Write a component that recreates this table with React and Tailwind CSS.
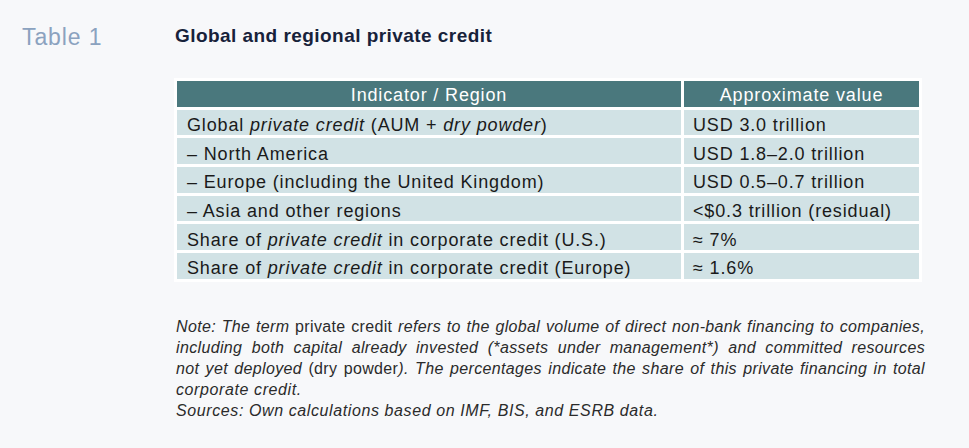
import React from "react";

const rows = [
  [<>Global <i>private credit</i> (AUM + <i>dry powder</i>)</>, "USD 3.0 trillion"],
  ["– North America", "USD 1.8–2.0 trillion"],
  ["– Europe (including the United Kingdom)", "USD 0.5–0.7 trillion"],
  ["– Asia and other regions", "<$0.3 trillion (residual)"],
  [<>Share of <i>private credit</i> in corporate credit (U.S.)</>, "≈ 7%"],
  [<>Share of <i>private credit</i> in corporate credit (Europe)</>, "≈ 1.6%"],
];

const J = "whitespace-nowrap tracking-[0.35px] text-justify [text-align-last:justify]";

export default function App() {
  return (
    <div className="w-[969px] h-[448px] bg-[#f7f8fa] flex font-['Liberation_Sans',Arial,sans-serif] overflow-hidden">
      <div className="w-[174px] shrink-0 pl-[22px] pt-[26px] text-[23px] tracking-[0.9px] text-[#8ba2bf] leading-none">Table 1</div>
      <div className="flex flex-col">
        <div className="pt-[26px] pl-[1px] text-[19px] font-bold tracking-[0.45px] text-[#17223a] leading-none">Global and regional private credit</div>
        <table className="mt-[33px] bg-white border-separate border-spacing-[3px] text-[18px] tracking-[0.85px] text-[#1a1a1a] leading-none w-[748px]">
          <thead>
            <tr className="h-[25.7px]">
              <th className="w-[504px] bg-[#4a787d] text-white font-normal text-center align-bottom p-0 pb-[3px]">Indicator / Region</th>
              <th className="w-[235px] bg-[#4a787d] text-white font-normal text-center align-bottom p-0 pb-[3px]">Approximate value</th>
            </tr>
          </thead>
          <tbody>
            {rows.map((r, i) => (
              <tr key={i} className="h-[25.7px]">
                <td className="bg-[#d1e2e5] p-0 pl-[10px] pb-[1.5px] align-bottom">{r[0]}</td>
                <td className="bg-[#d1e2e5] p-0 pl-[9px] pb-[1.5px] align-bottom">{r[1]}</td>
              </tr>
            ))}
          </tbody>
        </table>
        <div className="mt-[34px] pl-[2px] w-[751px] text-[16px] leading-[21px] tracking-[0.6px] text-[#2b2b2b] italic">
          <div className={J}>Note: The term <span className="not-italic">private credit</span> refers to the global volume of direct non-bank financing to companies,</div>
          <div className={J}>including both capital already invested (*assets under management*) and committed resources</div>
          <div className={J}>not yet deployed <span className="not-italic">(dry powder</span>). The percentages indicate the share of this private financing in total</div>
          <div>corporate credit.</div>
          <div>Sources: Own calculations based on IMF, BIS, and ESRB data.</div>
        </div>
      </div>
    </div>
  );
}
